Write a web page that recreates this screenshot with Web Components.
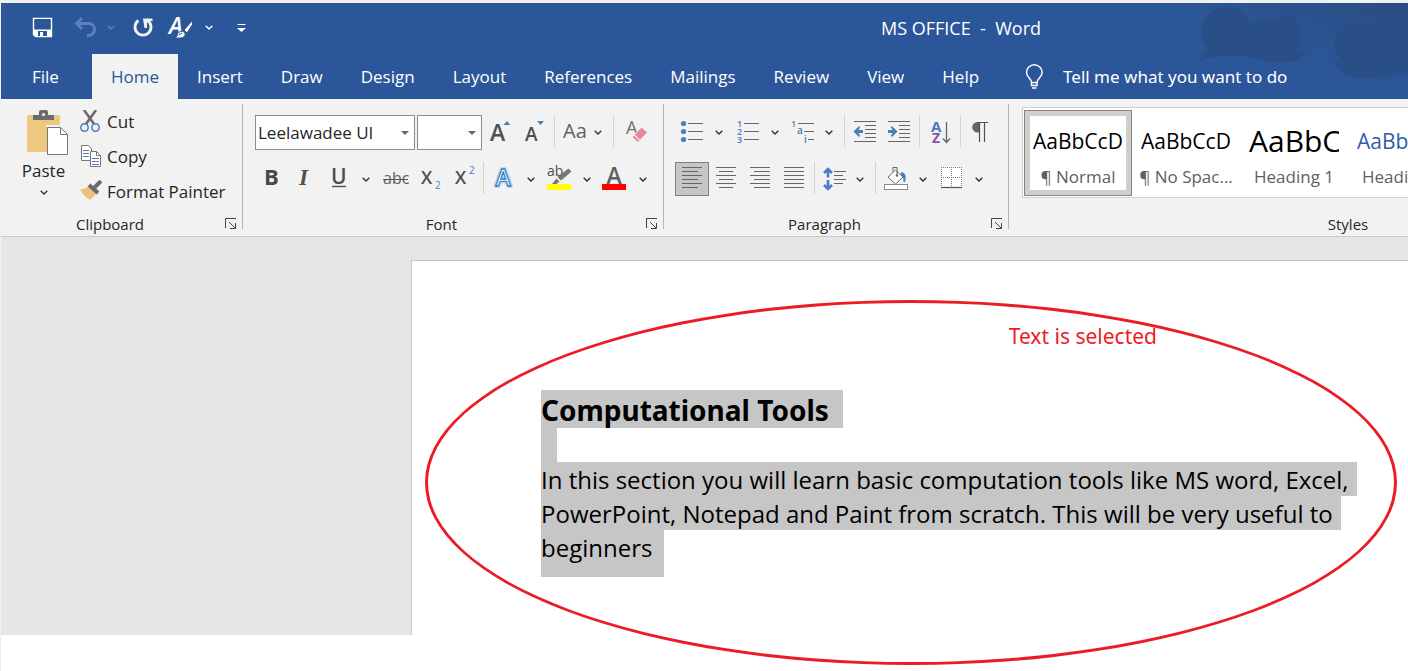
<!DOCTYPE html>
<html lang="en">
<head>
<meta charset="utf-8">
<title>MS OFFICE - Word</title>
<style>
  html, body { margin: 0; }
  body {
    min-height: 100vh;
    background: #fff;
    font-family: "Open Sans", "Noto Sans", sans-serif;
    font-size: 17px;
    color: #262626;
  }
</style>
</head>
<body>
<word-window></word-window>

<script>
const define = (name, html, setup) => {
  const template = document.createElement('template');
  template.innerHTML = html;
  customElements.define(name, class extends HTMLElement {
    constructor() {
      super();
      this.attachShadow({ mode: 'open' });
    }
    connectedCallback() {
      if (this.shadowRoot.childNodes.length) return;
      this.shadowRoot.append(template.content.cloneNode(true));
      if (setup) setup(this, this.shadowRoot);
    }
  });
};

/* Glyphs, each on a 34 x 34 board */
const G = '#666', B = '#4a7ebb';
const lines = (list, y0, step) => list.map(([a, b], i) =>
  `<path d="M${a} ${y0 + i * step}H${b}" stroke="${G}"/>`).join('');
const letter = (x, y, size, ch, fill = '#505050', extra = 'font-weight="600"') =>
  `<text x="${x}" y="${y}" font-size="${size}" fill="${fill}" ${extra}>${ch}</text>`;

const ICONS = {
  save: `<path d="M7.5 7.5h18v18h-16l-2-2z" fill="none" stroke="#fff" stroke-width="1.4"/><path d="M8 18.500h17v7H10l-2-2z" fill="#fff"/><rect x="9" y="8" width="15" height="9" fill="#2b579a"/><path d="M12 20h9v5h-9z" fill="#2b579a"/><rect x="14" y="21" width="3" height="4" fill="#fff"/>`,
  undo: `<path d="M15 7L9.500 12.500L15 18M10 12.500h12a5.500 5.500 0 0 1 5.500 5.800a6 6 0 0 1-6 6.200h-1.500" fill="none" stroke="#5d80b8" stroke-width="2.800"/>`,
  redo: `<path d="M12.500 9.500a8 8 0 1 0 9 0" fill="none" stroke="#f2f2f2" stroke-width="2.800"/><path d="M17 7.500h9.500v2.500h-5.500v7h-2.500z" fill="#f2f2f2"/>`,
  brush: letter(4, 23, 23, 'A', '#fff', 'font-weight="600" font-style="italic"') +
    `<path d="M27.500 9.500L19 19l3 3l5.500-8.500z" fill="#fff" stroke="#2b579a" stroke-width="1"/><path d="M9 26.500c3 0 3-2 4-4c2-3 6-3 7 0c1 4-4 5.500-11 4z" fill="#fff" stroke="#2b579a" stroke-width="1"/><path d="M14 24l3-2" stroke="#2b579a"/>`,
  customize: `<path d="M13.500 13.500h8" stroke="#fff"/><path d="M13 17h9l-4.500 4z" fill="#fff"/>`,
  bulb: `<path d="M14.500 22.500c0-4-5-5-5-10a7.800 7.800 0 0 1 15.600 0c0 5-5 6-5 10zM14.500 22v3.500h5.500v-3.500" fill="none" stroke="#fff" stroke-width="1.500"/><path d="M15 28h4.500" stroke="#fff" stroke-width="1.500"/>`,

  grow: letter(7, 26, 23, 'A') + `<path d="M20.500 10h7l-3.500-4z" fill="${B}"/>`,
  shrink: letter(8, 26, 19, 'A') + `<path d="M20 6h7l-3.500 4z" fill="${B}"/>`,
  case: letter(7, 23, 20, 'Aa', '#606060', 'font-weight="500"'),
  clear: letter(9, 19, 18, 'A', '#707070', 'font-weight="500"') +
    `<path d="M24.500 12L30.500 17.500L21 27.500L15 22z" fill="#e8879a" stroke="#f2f2f2"/><path d="M16.500 19.500L23.500 25.800" stroke="#f7e4e8" stroke-width="1.300"/>`,
  bold: letter(10, 23, 22, 'B', '#484848', 'font-weight="700"'),
  italic: letter(11, 23, 23, 'I', '#505050', 'font-weight="700" font-style="italic" font-family="Liberation Serif, serif"'),
  underline: letter(9, 22, 21, 'U', '#505050') + `<path d="M10 24.500h14" stroke="#505050" stroke-width="1.400"/>`,
  strike: letter(5, 22, 16, 'abc', '#606060', '') + `<path d="M5 17.500h25" stroke="#505050"/>`,
  sub: letter(9, 22, 18, 'X') + letter(23, 27, 10, '2', B, ''),
  sup: letter(9, 22, 18, 'X') + letter(23, 12, 10, '2', B, ''),
  effects: `<text x="16" y="24" font-size="23" font-weight="600" text-anchor="middle" fill="#fff" stroke="#bcd8f2" stroke-width="4" stroke-linejoin="round">A</text><text x="16" y="24" font-size="23" font-weight="600" text-anchor="middle" fill="#fff" stroke="#3f7fc4" stroke-width="1.300">A</text>`,
  highlight: letter(4, 14, 14, 'ab', '#505050', '') +
    `<path d="M25.500 7l2.500 2.500L18 18l-3-3z" fill="#777" stroke="#777"/><path d="M13.500 16.500l3 3l-3 2.500h-4.500z" fill="#777"/><rect x="4" y="22" width="24" height="6" fill="#ff0"/>`,
  color: `<text x="15" y="22" font-size="23" font-weight="600" text-anchor="middle" fill="#606060">A</text><rect x="3" y="22" width="24" height="6" fill="#f00"/>`,

  bullets: [8.5, 16.5, 24.5].map(y => `<circle cx="8.500" cy="${y}" r="2.600" fill="${B}"/>`).join('') + lines([[13, 28], [13, 28], [13, 28]], 8.5, 8),
  numbers: [1, 2, 3].map((n, i) => letter(6, 12 + i * 8, 9, n, B, 'font-weight="600"')).join('') + lines([[13, 28], [13, 28], [13, 28]], 8.5, 8),
  multilevel: letter(5, 12, 9, '1', B) + letter(11, 19, 10, 'a', B) + letter(18, 28, 10, 'i', B) + lines([[12, 28], [18, 28], [22, 28]], 8.5, 8),
  outdent: lines([[6, 28], [17, 28], [17, 28], [17, 28], [17, 28], [6, 28]], 6.5, 4) + `<path d="M5.500 16.500l5-5h2l-2 3.500h4.500v3h-4.500l2 3.500h-2z" fill="${B}"/>`,
  indent: lines([[6, 28], [17, 28], [17, 28], [17, 28], [17, 28], [6, 28]], 6.5, 4) + `<path d="M15.500 16.500l-5-5h-2l2 3.500h-4.500v3h4.500l-2 3.500h2z" fill="${B}"/>`,
  sort: letter(8, 17, 15, 'A', B, 'font-weight="700"') + letter(9, 28, 14, 'Z', '#8a52a8', 'font-weight="700"') + `<path d="M23.500 7v20M20 23.500l3.500 4l3.500-4" fill="none" stroke="${G}" stroke-width="1.300"/>`,
  pilcrow: `<path d="M15 7h-1.500a5.300 5.300 0 0 0 0 10.600h1.500z" fill="${G}"/><path d="M13 7.500h11M15.500 7v20M20.500 7v20" stroke="#505050" stroke-width="1.200"/>`,

  left: lines([[7, 27], [7, 23], [7, 27], [7, 23], [7, 27], [7, 23]], 5.5, 4),
  center: lines([[7, 27], [10, 24], [7, 27], [10, 24], [7, 27], [10, 24]], 5.5, 4),
  right: lines([[7, 27], [11, 27], [7, 27], [11, 27], [7, 27], [11, 27]], 5.5, 4),
  justify: lines([[7, 27], [7, 27], [7, 27], [7, 27], [7, 27], [7, 27]], 5.5, 4),
  spacing: `<path d="M11 7v8.500M11 18v8.500M7 11L11 7l4 4M7 23l4 4l4-4" fill="none" stroke="#4a7ec8" stroke-width="2.600"/>` + lines([[17, 29], [17, 26], [17, 29], [17, 26]], 9.5, 4),
  shading: `<path d="M9 15L16.500 8L24 15L16.500 22z" fill="#fff" stroke="${G}"/><path d="M14 10V5.500h4V13" fill="none" stroke="${G}"/><circle cx="18" cy="13.500" r="1.300" fill="${G}"/><path d="M22 10c5 1 5.500 5 4 10h-1.500c0-4-.5-5-2.500-7z" fill="${B}"/><rect x="5.500" y="22.500" width="23" height="5" fill="#fff" stroke="#8c8c8c"/>`,
  borders: `<rect x="6" y="5" width="21" height="20" fill="#fff"/><path d="M6 5.500h21M6 15.500h21M6.500 5v20M16.500 5v20M26.500 5v20" fill="none" stroke="#777" stroke-dasharray="1 1"/><path d="M6 25.500h21" stroke="#505050" stroke-width="1.200"/>`,
};
const board = name => `<svg width="34" height="34" viewBox="0 0 34 34" aria-hidden="true">${ICONS[name]}</svg>`;
const CHEVRON = '<svg width="8" height="5" viewBox="0 0 8 5" aria-hidden="true"><path d="M.7.7L4 3.900L7.300.7" fill="none" stroke="currentColor" stroke-width="1.400"/></svg>';

/* A ribbon tool; "menu" adds the drop-down half */
define('tool-button', `
  <style>
    :host { display: flex; flex: none; color: #333; }
    :host([menu]) { margin-right: var(--menu-gap, 2px); }
    button { display: flex; align-items: center; justify-content: center; height: 34px; padding: 0; border: 0; background: none; color: inherit; font: inherit; }
    .main { width: var(--tool-width, 34px); }
    .more { width: 20px; }
    svg { flex: none; overflow: visible; }
    :host([pressed]) .main { background: #c6c6c6; outline: 1px solid #808080; outline-offset: -1px; }
    :host([disabled]) { color: #5d80b8; }
  </style>
  <button class="main" type="button"></button>`, (el, root) => {
  const main = root.querySelector('.main');
  const label = el.getAttribute('label');
  main.innerHTML = board(el.getAttribute('icon'));
  main.setAttribute('aria-label', label);
  if (el.hasAttribute('pressed')) main.setAttribute('aria-pressed', 'true');
  if (el.hasAttribute('menu')) {
    const more = document.createElement('button');
    more.type = 'button';
    more.className = 'more';
    more.setAttribute('aria-label', label + ' options');
    more.innerHTML = CHEVRON;
    root.append(more);
  }
});

define('tool-separator', `
  <style>:host { display: block; flex: none; width: 1px; height: 32px; margin: 0 3px; background: #d2d2d2; }</style>`);

define('tool-row', `
  <style>:host { display: flex; height: 35px; align-items: flex-start; }</style><slot></slot>`);

define('combo-box', `
  <style>
    :host { display: flex; position: relative; flex: none; width: var(--combo-width); }
    select { appearance: none; box-sizing: border-box; width: 100%; height: 35px; margin: 0; padding: 0 20px 0 2px; border: 1px solid #8c8c8c; border-radius: 0; background: #fff; color: #262626; font: inherit; }
    svg { position: absolute; right: 6px; top: 16px; pointer-events: none; }
  </style>
  <select></select>
  <svg width="8" height="4" viewBox="0 0 8 4" aria-hidden="true"><path d="M0 0h8L4 4z" fill="#666"/></svg>`, (el, root) => {
  const select = root.querySelector('select');
  select.setAttribute('aria-label', el.getAttribute('label'));
  select.add(new Option(el.getAttribute('value')));
});

define('ribbon-group', `
  <style>
    :host { display: flex; flex-direction: column; flex: none; position: relative; box-sizing: border-box; width: var(--group-width); }
    :host(:not([last]))::after { content: ""; position: absolute; right: 0; top: 5px; bottom: 7px; width: 1px; background: #b4b4b4; }
    .content { flex: 1; padding: var(--group-padding); }
    footer { display: flex; align-items: center; height: 24px; font-size: 15px; }
    span { flex: 1; text-align: center; }
    button { width: 24px; height: 24px; padding: 0 0 0 6px; border: 0; background: none; }
    svg { display: block; }
    :host([last]) button { display: none; }
  </style>
  <div class="content"><slot></slot></div>
  <footer><span></span><button type="button"><svg width="12" height="12" viewBox="0 0 12 12" aria-hidden="true"><path d="M.5 10V.5H11M4 4l6 6M10.500 5v5.500H5" fill="none" stroke="#444"/></svg></button></footer>`, (el, root) => {
  root.querySelector('span').textContent = el.getAttribute('label');
  root.querySelector('button').setAttribute('aria-label', el.getAttribute('label') + ' settings');
});

define('clipboard-tools', `
  <style>
    :host { display: flex; }
    button { display: flex; align-items: center; padding: 0; border: 0; background: none; color: inherit; font: inherit; }
    .paste { flex-direction: column; width: 43px; margin-right: 15px; padding-top: 5px; line-height: 24px; }
    .paste svg { overflow: visible; }
    .paste .icon { margin-bottom: 4px; }
    .paste .more { margin-top: 7px; color: #333; }
    .list { display: flex; flex-direction: column; }
    .list button { height: 35px; gap: 5px; }
  </style>
  <button class="paste" type="button">
    <svg class="icon" width="36" height="46" viewBox="0 0 36 46" aria-hidden="true">
      <rect x="1" y="6" width="33" height="37" rx="2" fill="#eec87e"/>
      <path d="M7 11V6h6V3q0-2 2-2h5q2 0 2 2v3h6v5z" fill="#6d6d6d"/><circle cx="17.500" cy="5.500" r="1.600" fill="#f2f2f2"/>
      <path d="M20 17h14" stroke="#f2f2f2" stroke-width="2"/>
      <path d="M21.500 18.500h13l7 7v20h-20z" fill="#fff" stroke="#777"/><path d="M34.500 18.500v7h7" fill="none" stroke="#777"/>
    </svg>
    Paste
    <svg class="more" width="8" height="5" viewBox="0 0 8 5" aria-hidden="true"><path d="M.7.7L4 3.900L7.300.7" fill="none" stroke="currentColor" stroke-width="1.400"/></svg>
  </button>
  <div class="list">
    <button type="button"><svg width="22" height="24" viewBox="0 0 22 24" aria-hidden="true"><path d="M4 0l10 14M16 0L6 14" stroke="#6b6b6b" stroke-width="2.600"/><circle cx="4.500" cy="17.500" r="3.700" fill="#f2f2f2" stroke="${B}" stroke-width="1.500"/><circle cx="15.500" cy="17.500" r="3.700" fill="#f2f2f2" stroke="${B}" stroke-width="1.500"/></svg>Cut</button>
    <button type="button"><svg width="22" height="24" viewBox="0 0 22 24" aria-hidden="true"><path d="M1.500.5h7l3 3v12h-10z" fill="#fff" stroke="#777"/><path d="M3 5.500h6M3 8.500h6M3 11.500h6" stroke="${B}"/><path d="M10.500 6.500h6l4 4v11h-10z" fill="#fff" stroke="#777"/><path d="M16.500 6.500v4h4" fill="none" stroke="#777"/><path d="M12 13.500h7M12 16.500h7M12 19.500h7" stroke="${B}"/></svg>Copy</button>
    <button type="button"><svg width="22" height="24" viewBox="0 0 22 24" aria-hidden="true"><path d="M0 9q5 1 8.500-3l8 7.500L10 20q-6-3-10-11z" fill="#ebc27c"/><path d="M9 5l9 8M13 9L21 1" stroke="#6b6b6b" stroke-width="4"/></svg>Format Painter</button>
  </div>`);

define('style-card', `
  <style>
    :host { display: block; flex: none; width: 108px; }
    button { display: flex; flex-direction: column; align-items: center; box-sizing: border-box; width: 100%; height: 86px; padding: 14px 3px 0; border: 1px solid transparent; background: none; font: inherit; color: #606060; }
    :host([selected]) button { border-color: #85857d; box-shadow: inset 0 0 0 5px #cfcfcb; }
    .preview { box-sizing: border-box; width: 90px; height: 32px; overflow: hidden; line-height: 32px; font-size: 21px; text-align: left; white-space: nowrap; color: var(--preview-color, #000); }
    :host([large]) .preview { font-size: 30px; }
    .name { margin-top: 9px; line-height: 22px; white-space: nowrap; font-size: 17px; }
  </style>
  <button type="button"><span class="preview">AaBbCcD</span><span class="name"><slot></slot></span></button>`);

define('style-gallery', `
  <style>
    :host { display: flex; box-sizing: border-box; width: 652px; height: 91px; padding: 2px 1px; border: 1px solid #d0d0d0; background: #fff; }
  </style>
  <slot></slot>`);

define('quick-access', `
  <style>
    :host { display: flex; flex: none; gap: 5px; padding-left: 23px; --menu-gap: 0px; }
    tool-button { color: #fff; }
    tool-button[disabled] { color: #5d80b8; }
    .wide { --tool-width: 38px; }
  </style>
  <tool-button class="wide" icon="save" label="Save"></tool-button>
  <tool-button icon="undo" label="Undo" menu disabled></tool-button>
  <tool-button icon="redo" label="Repeat"></tool-button>
  <tool-button icon="brush" label="Text style" menu></tool-button>
  <tool-button icon="customize" label="Customize toolbar"></tool-button>`);

define('title-bar', `
  <style>
    :host { display: flex; align-items: center; height: 49px; padding-bottom: 2px; color: #fff; }
    h1 { flex: 1; margin: 0; padding-left: 256px; text-align: center; font-size: 18px; font-weight: 400; white-space: pre; }
  </style>
  <quick-access></quick-access>
  <h1>MS OFFICE  -  Word</h1>`);

define('ribbon-tab', `
  <style>
    :host { display: flex; flex: none; }
    button { padding: 0 19px; border: 0; background: none; color: #fff; font: inherit; }
    :host([active]) button { background: #f2f2f2; color: #2b579a; }
  </style>
  <button type="button"><slot></slot></button>`);

define('ribbon-tabs', `
  <style>
    :host { display: flex; height: 45px; padding-left: 12px; }
    .file { margin-right: 14px; }
    label { display: flex; flex: 1; align-items: center; padding-left: 19px; color: #fff; }
    label svg { flex: none; margin-right: 12px; }
    input { flex: 1; min-width: 0; padding: 0; border: 0; outline: 0; background: none; color: inherit; font: inherit; font-family: "Noto Sans", sans-serif; }
    input::placeholder { color: inherit; opacity: 1; }
  </style>
  <ribbon-tab class="file">File</ribbon-tab>
  <ribbon-tab active>Home</ribbon-tab>
  <ribbon-tab>Insert</ribbon-tab>
  <ribbon-tab>Draw</ribbon-tab>
  <ribbon-tab>Design</ribbon-tab>
  <ribbon-tab>Layout</ribbon-tab>
  <ribbon-tab>References</ribbon-tab>
  <ribbon-tab>Mailings</ribbon-tab>
  <ribbon-tab>Review</ribbon-tab>
  <ribbon-tab>View</ribbon-tab>
  <ribbon-tab>Help</ribbon-tab>
  <label>${board('bulb')}<input type="text" aria-label="Tell me what you want to do" placeholder="Tell me what you want to do"></label>`);

define('word-header', `
  <style>
    :host { display: block; position: relative; background: #2b579a; }
    .art { position: absolute; right: 0; top: 0; }
    title-bar, ribbon-tabs { position: relative; }
  </style>
  <svg class="art" width="260" height="96" viewBox="0 0 260 96" aria-hidden="true">
    <defs><linearGradient id="shade" x1="0" y1="1" x2="1" y2="0"><stop offset=".45" stop-color="#2a4d82" stop-opacity="0"/><stop offset="1" stop-color="#2a4d82"/></linearGradient></defs>
    <rect width="260" height="96" fill="url(#shade)"/>
    <g fill="#2a4f88">
      <path d="M52 58q2-8 8-12a25 25 0 1 1 42-25a16 16 0 0 1 20-1a17 17 0 0 1 31 11q0 12-6 18l12-1q-6 11-28 12q-16-1-32-6q-22-5-47 4z"/>
      <path d="M187 35a25 25 0 0 1 34-13l39-22v69q-26 6-50 6q-22-4-24-17l10 3q-11-12-9-26z"/>
    </g>
  </svg>
  <title-bar></title-bar>
  <ribbon-tabs></ribbon-tabs>`);

define('word-ribbon', `
  <style>
    :host { display: flex; height: 137px; overflow: hidden; border-bottom: 1px solid #c8c8c8; background: #f2f2f2; }
    .clipboard { --group-width: 242px; --group-padding: 5px 0 0 21px; }
    .font { --group-width: 421px; --group-padding: 16px 0 0 12px; }
    .paragraph { --group-width: 345px; --group-padding: 16px 0 0 11px; }
    .styles { --group-width: 678px; --group-padding: 8px 0 0 13px; }
    tool-row + tool-row { margin-top: 12px; }
    .name { --combo-width: 160px; margin-right: 2px; }
    .size { --combo-width: 65px; margin-right: 1px; }
    .font .letters { margin-left: -1px; }
    .narrow { --tool-width: 32px; }
    .case { --tool-width: 30px; }
    .blue { --preview-color: #2f5ca8; }
  </style>
  <ribbon-group class="clipboard" label="Clipboard"><clipboard-tools></clipboard-tools></ribbon-group>
  <ribbon-group class="font" label="Font">
    <tool-row>
      <combo-box class="name" label="Font name" value="Leelawadee UI"></combo-box>
      <combo-box class="size" label="Font size" value=""></combo-box>
      <tool-button icon="grow" label="Increase font size"></tool-button>
      <tool-button icon="shrink" label="Decrease font size"></tool-button>
      <tool-separator></tool-separator>
      <tool-button class="case" icon="case" label="Change case" menu></tool-button>
      <tool-separator></tool-separator>
      <tool-button icon="clear" label="Clear formatting"></tool-button>
    </tool-row>
    <tool-row class="letters">
      <tool-button icon="bold" label="Bold"></tool-button>
      <tool-button icon="italic" label="Italic"></tool-button>
      <tool-button icon="underline" label="Underline" menu></tool-button>
      <tool-button icon="strike" label="Strikethrough"></tool-button>
      <tool-button icon="sub" label="Subscript"></tool-button>
      <tool-button icon="sup" label="Superscript"></tool-button>
      <tool-separator></tool-separator>
      <tool-button icon="effects" label="Text effects" menu></tool-button>
      <tool-button icon="highlight" label="Highlight colour" menu></tool-button>
      <tool-button icon="color" label="Font colour" menu></tool-button>
    </tool-row>
  </ribbon-group>
  <ribbon-group class="paragraph" label="Paragraph">
    <tool-row>
      <tool-button icon="bullets" label="Bullets" menu></tool-button>
      <tool-button icon="numbers" label="Numbering" menu></tool-button>
      <tool-button class="narrow" icon="multilevel" label="Multilevel list" menu></tool-button>
      <tool-separator></tool-separator>
      <tool-button icon="outdent" label="Decrease indent"></tool-button>
      <tool-button icon="indent" label="Increase indent"></tool-button>
      <tool-separator></tool-separator>
      <tool-button icon="sort" label="Sort"></tool-button>
      <tool-separator></tool-separator>
      <tool-button icon="pilcrow" label="Show marks"></tool-button>
    </tool-row>
    <tool-row>
      <tool-button icon="left" label="Align left" pressed></tool-button>
      <tool-button icon="center" label="Center"></tool-button>
      <tool-button icon="right" label="Align right"></tool-button>
      <tool-button icon="justify" label="Justify"></tool-button>
      <tool-separator></tool-separator>
      <tool-button class="narrow" icon="spacing" label="Line spacing" menu></tool-button>
      <tool-separator></tool-separator>
      <tool-button icon="shading" label="Shading" menu></tool-button>
      <tool-button icon="borders" label="Borders" menu></tool-button>
    </tool-row>
  </ribbon-group>
  <ribbon-group class="styles" label="Styles" last>
    <style-gallery>
      <style-card selected>¶ Normal</style-card>
      <style-card>¶ No Spac...</style-card>
      <style-card large>Heading 1</style-card>
      <style-card class="blue">Heading 2</style-card>
    </style-gallery>
  </ribbon-group>`);

define('word-page', `
  <style>
    :host { display: block; position: relative; flex: 1; box-sizing: border-box; margin-top: 23px; padding: 129px 0 58px 129px; border: solid #c6c6c6; border-width: 1px 0 0 1px; background: #fff; color: #000; }
    h2, p { margin: 0; font-size: 24px; line-height: 32px; }
    h2 { font-family: "Noto Sans", sans-serif; font-size: 28px; line-height: 36px; }
    span { display: block; box-sizing: border-box; width: fit-content; padding: 2px 8px 0 0; background: #c6c6c6; white-space: nowrap; }
    h2 span { padding-right: 14px; }
    .blank span { width: 16px; height: 34px; }
    .last { padding-right: 12px; padding-bottom: 13px; }
    .ring { position: absolute; left: 13px; right: 11px; top: 39px; bottom: -30px; box-sizing: border-box; border: 3px solid #ec1c24; border-radius: 50%; pointer-events: none; }
    .note { position: absolute; right: 251px; top: 60px; font-family: "Noto Sans", sans-serif; font-size: 21px; line-height: 30px; color: #ec1c24; }
  </style>
  <h2><span>Computational Tools</span></h2>
  <p class="blank"><span></span></p>
  <p><span>In this section you will learn basic computation tools like MS word, Excel,</span><span>PowerPoint, Notepad and Paint from scratch. This will be very useful to</span><span class="last">beginners</span></p>
  <div class="ring"></div>
  <div class="note">Text is selected</div>`);

define('word-window', `
  <style>
    :host { display: block; box-sizing: border-box; min-height: 100vh; border: solid #f0f0f0; border-width: 3px 0 0 1px; overflow: hidden; }
    main { display: flex; background: #e6e6e6; }
    main::before { content: ""; flex: none; width: 410px; }
  </style>
  <word-header></word-header>
  <word-ribbon></word-ribbon>
  <main><word-page></word-page></main>`);
</script>
</body>
</html>
